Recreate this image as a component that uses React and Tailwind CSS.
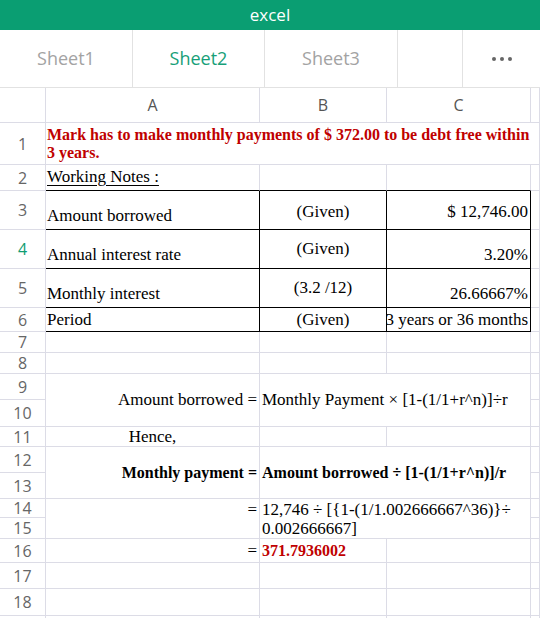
import React from 'react'
import { twMerge } from 'tailwind-merge'

const rowStart = [
  '', 'row-start-1', 'row-start-2', 'row-start-3', 'row-start-4', 'row-start-5', 'row-start-6',
  'row-start-7', 'row-start-8', 'row-start-9', 'row-start-10', 'row-start-11', 'row-start-12',
  'row-start-13', 'row-start-14', 'row-start-15', 'row-start-16', 'row-start-17', 'row-start-18',
  'row-start-19', 'row-start-20',
]

const colStart = ['', 'col-start-1', 'col-start-2', 'col-start-3', 'col-start-4', 'col-start-5']

// one grid cell, light gridlines on the bottom and right unless overridden
function Cell({ row, col, className, children }) {
  return (
    <div
      className={twMerge(
        'flex border-b border-r border-b-[#dcdce6] border-r-[#dcdce6] overflow-hidden whitespace-nowrap',
        rowStart[row],
        colStart[col],
        className
      )}
    >
      {children}
    </div>
  )
}

function RowNumber({ n, active }) {
  return (
    <Cell
      row={n + 1}
      col={1}
      className={`items-center justify-center text-[16px] leading-none font-['Open_Sans',sans-serif] ${active ? 'text-[#0f9d72]' : 'text-[#666]'}`}
    >
      {n}
    </Cell>
  )
}

function App() {
  const numbers = Array.from({ length: 18 }, (_, i) => i + 1)
  const plain = [
    [1, [5]],
    [2, [5]],
    [3, [5]],
    [4, [5]],
    [5, [5]],
    [6, [5]],
    [7, [2, 3, 4, 5]],
    [8, [2, 3, 4, 5]],
    [9, [5]],
    [10, [5]],
    [11, [3, 4, 5]],
    [12, [5]],
    [13, [5]],
    [14, [5]],
    [15, [5]],
    [16, [4, 5]],
    [17, [2, 3, 4, 5]],
    [18, [2, 3, 4, 5]],
  ]
  const table = 'border-b-black border-r-black'

  return (
    <div className="w-[540px] h-[618px] overflow-hidden bg-white">
      <div className="h-[30px] bg-[#0a9e72] flex items-center justify-center text-white text-[17px] font-['Open_Sans',sans-serif]">
        excel
      </div>

      <div className="h-[58px] grid grid-cols-[133px_132px_133px_65px_1fr] border-b border-[#e2e2e2] font-['Open_Sans',sans-serif] text-[18px]">
        <div className="flex items-center justify-center border-r border-[#e2e2e2] text-[#a3a3a3]">Sheet1</div>
        <div className="flex items-center justify-center border-r border-[#e2e2e2] text-[#17a078]">Sheet2</div>
        <div className="flex items-center justify-center border-r border-[#e2e2e2] text-[#a3a3a3]">Sheet3</div>
        <div className="border-r border-[#e2e2e2]"></div>
        <div className="flex items-center justify-center gap-[4px]">
          <span className="w-[4px] h-[4px] rounded-full bg-[#666]"></span>
          <span className="w-[4px] h-[4px] rounded-full bg-[#666]"></span>
          <span className="w-[4px] h-[4px] rounded-full bg-[#666]"></span>
        </div>
      </div>

      <div className="grid grid-cols-[46px_214px_127px_144px_1fr] grid-rows-[35px_42px_26px_39px_39px_39px_24px_21px_21px_26px_27px_20px_26px_26px_19px_21px_24px_26px_27px_20px] font-['Liberation_Serif',serif] text-[17px] text-black">
        {/* column headers */}
        <Cell row={1} col={1} />
        <Cell row={1} col={2} className="items-center justify-center text-[16px] text-[#555] font-['Open_Sans',sans-serif]">A</Cell>
        <Cell row={1} col={3} className="items-center justify-center text-[16px] text-[#555] font-['Open_Sans',sans-serif]">B</Cell>
        <Cell row={1} col={4} className="items-center justify-center text-[16px] text-[#555] font-['Open_Sans',sans-serif]">C</Cell>
        <Cell row={1} col={5} />

        {numbers.map((n) => (
          <RowNumber key={n} n={n} active={n === 4} />
        ))}

        {plain.map(([r, cols]) =>
          cols.map((c) => <Cell key={`${r}-${c}`} row={r + 1} col={c} />)
        )}

        {/* 1 */}
        <Cell row={2} col={2} className="col-span-3 items-center pl-[1px] text-[16px] font-bold text-[#c00000] leading-[18px] border-r-0">
          <div>
            Mark has to make monthly payments of $ 372.00 to be debt free within
            <br />
            3 years.
          </div>
        </Cell>

        {/* 2 */}
        <Cell row={3} col={2} className="items-end pl-[1px] pb-[1px] border-b-black">
          <span className="underline underline-offset-[3px]">Working Notes :</span>
        </Cell>
        <Cell row={3} col={3} className="border-b-black" />
        <Cell row={3} col={4} className="border-b-black" />

        {/* 3 - 6 */}
        <Cell row={4} col={2} className={`items-end pl-[1px] pb-[1px] ${table}`}>Amount borrowed</Cell>
        <Cell row={4} col={3} className={`items-center justify-center pt-[3px] ${table}`}>(Given)</Cell>
        <Cell row={4} col={4} className={`items-center justify-end pt-[3px] pr-[2px] ${table}`}>$ 12,746.00</Cell>

        <Cell row={5} col={2} className={`items-end pl-[1px] pb-[1px] ${table}`}>Annual interest rate</Cell>
        <Cell row={5} col={3} className={`items-center justify-center ${table}`}>(Given)</Cell>
        <Cell row={5} col={4} className={`items-end justify-end pb-[1px] pr-[2px] ${table}`}>3.20%</Cell>

        <Cell row={6} col={2} className={`items-end pl-[1px] pb-[1px] ${table}`}>Monthly interest</Cell>
        <Cell row={6} col={3} className={`items-center justify-center ${table}`}>(3.2 /12)</Cell>
        <Cell row={6} col={4} className={`items-end justify-end pb-[1px] pr-[2px] ${table}`}>26.66667%</Cell>

        <Cell row={7} col={2} className={`items-center pl-[1px] ${table}`}>Period</Cell>
        <Cell row={7} col={3} className={`items-center justify-center ${table}`}>(Given)</Cell>
        <Cell row={7} col={4} className={`items-center justify-end pr-[2px] ${table}`}>3 years or 36 months</Cell>

        {/* 9 - 10 */}
        <Cell row={10} col={2} className="row-span-2 items-center justify-end pr-[2px]">Amount borrowed =</Cell>
        <Cell row={10} col={3} className="row-span-2 col-span-2 items-center pl-[2px]">
          Monthly Payment × [1-(1/1+r^n)]÷r
        </Cell>

        {/* 11 */}
        <Cell row={12} col={2} className="items-center justify-center">Hence,</Cell>

        {/* 12 - 13 */}
        <Cell row={13} col={2} className="row-span-2 items-center justify-end pr-[2px] text-[16px] font-bold">
          Monthly payment =
        </Cell>
        <Cell row={13} col={3} className="row-span-2 col-span-2 items-center pl-[2px] text-[16px] font-bold">
          Amount borrowed ÷ [1-(1/1+r^n)]/r
        </Cell>

        {/* 14 - 15 */}
        <Cell row={15} col={2} className="row-span-2 items-start justify-end pr-[2px] leading-[19px] pt-[1px]">=</Cell>
        <Cell row={15} col={3} className="row-span-2 col-span-2 items-start pl-[2px] leading-[19px] pt-[1px]">
          <div>
            12,746 ÷ [{'{'}1-(1/1.002666667^36){'}'}÷
            <br />
            0.002666667]
          </div>
        </Cell>

        {/* 16 */}
        <Cell row={17} col={2} className="items-center justify-end pr-[2px]">=</Cell>
        <Cell row={17} col={3} className="items-center pl-[2px] text-[16px] font-bold text-[#c00000]">371.7936002</Cell>

        {/* next row peeking at the bottom */}
        <Cell row={20} col={1} />
        <Cell row={20} col={2} />
        <Cell row={20} col={3} />
        <Cell row={20} col={4} />
        <Cell row={20} col={5} />
      </div>
    </div>
  )
}

export default App
